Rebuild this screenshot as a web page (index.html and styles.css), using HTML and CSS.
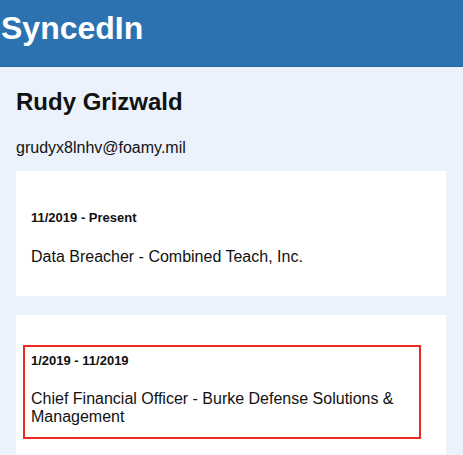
FILE: index.html
```html
<!DOCTYPE html>
<html>
<head>
<meta charset="utf-8">
<link rel="stylesheet" href="styles.css">
</head>
<body>
<header class="topbar">
  <h1 class="brand">SyncedIn</h1>
</header>
<main class="profile">
  <h2 class="name">Rudy Grizwald</h2>
  <p class="email">grudyx8lnhv@foamy.mil</p>
  <section class="card">
    <div class="job">
      <h5 class="dates">11/2019 - Present</h5>
      <p class="role">Data Breacher - Combined Teach, Inc.</p>
    </div>
  </section>
  <section class="card">
    <div class="job job--highlight">
      <h5 class="dates">1/2019 - 11/2019</h5>
      <p class="role">Chief Financial Officer - Burke Defense Solutions &amp; Management</p>
    </div>
  </section>
</main>
</body>
</html>
```

FILE: styles.css
```css
html, body {
  margin: 0;
  padding: 0;
}
body {
  background: #ebf2fc;
  font-family: "Liberation Sans", Arial, sans-serif;
  color: #111;
}
.topbar {
  background: #2d72b0;
  border-bottom: 1px solid #2866a2;
  height: 67px;
  padding: 10px 0 0 1px;
  box-sizing: border-box;
}
.brand {
  margin: 0;
  color: #fff;
  font-size: 32px;
  line-height: 37px;
  font-weight: bold;
}
.profile {
  display: flex;
  flex-direction: column;
  padding-top: 21px;
}
.name {
  margin: 0 16px;
  font-size: 24px;
  line-height: 28px;
  font-weight: bold;
}
.email {
  margin: 23px 16px 0;
  font-size: 16px;
  line-height: 18px;
}
.card {
  background: #fff;
  margin: 15px 17px 0 16px;
  padding: 39px 15px 29px;
}
.email + .card {
  margin-top: 14px;
}
.card + .card {
  margin-top: 19px;
  padding-top: 30px;
}
.dates {
  margin: 0;
  font-size: 13px;
  line-height: 15px;
  font-weight: bold;
}
.role {
  margin: 23px 0 0;
  font-size: 16px;
  line-height: 18.5px;
}
.job--highlight {
  border: 2px solid #ee2a1c;
  margin-left: -8px;
  width: 382px;
  padding: 6px 6px 10px;
}
.job--highlight .role {
  margin-top: 22px;
}
```
